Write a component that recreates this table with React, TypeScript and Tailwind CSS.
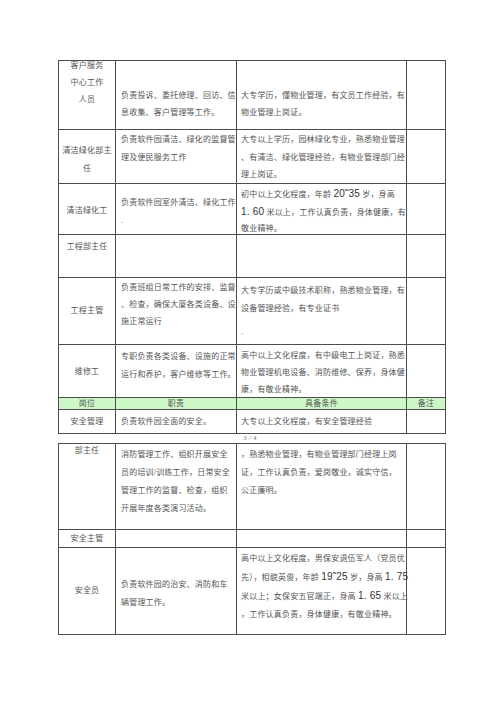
import React from 'react';

type L = React.ReactNode;

// numbers in the scanned doc are set in a sans face, a bit larger
const N = ({ children }: { children: React.ReactNode }) => (
  <span className="font-['Liberation_Sans',sans-serif] text-[10px] text-[#333]">{children}</span>
);

const Lines = ({ lines, className = '' }: { lines: L[]; className?: string }) => (
  <div className={className}>
    {lines.map((l, i) => (
      <div key={i} className="whitespace-nowrap">
        {l}
      </div>
    ))}
  </div>
);

const Row = ({ h, children, head = false }: { h: string; children: React.ReactNode; head?: boolean }) => (
  <div
    className={`grid grid-cols-[57px_121px_170px_39px] border-b border-[#4d4d4d] ${h} ${head ? 'bg-[#cdf7c6]' : ''}`}
  >
    {children}
  </div>
);

const C = ({ className = '', children }: { className?: string; children?: React.ReactNode }) => (
  <div className={`border-r border-[#4d4d4d] overflow-visible ${className}`}>{children}</div>
);

export default function App() {
  return (
    <div className="w-[500px] h-[707px] bg-white pt-[60px] font-['Liberation_Serif','Noto_Sans_CJK_SC',serif] text-[8px] tracking-[0.2px] text-[#555]">
      {/* page 3 */}
      <div className="ml-[58px] w-[388px] border-l border-t border-[#4d4d4d]">
        <Row h="h-[69px]">
          <C className="text-center leading-[17px]">
            <Lines className="-mt-[4px]" lines={['客户服务', '中心工作', '人员']} />
          </C>
          <C className="pl-[5px] pt-[26px] leading-[17px]">
            <Lines lines={['负责投诉、委托修理、回访、信', '息收集、客户管理等工作。']} />
          </C>
          <C className="pl-[4px] pt-[26px] leading-[17px]">
            <Lines lines={['大专学历，懂物业管理，有文员工作经验，有', '物业管理上岗证。']} />
          </C>
          <C />
        </Row>

        <Row h="h-[54px]">
          <C className="text-center pt-[12px] leading-[17.5px]">
            <Lines lines={['清洁绿化部主', '任']} />
          </C>
          <C className="pl-[5px] pt-[1px] leading-[17.5px]">
            <Lines lines={['负责软件园清洁、绿化的监督管', '理及便民服务工作']} />
          </C>
          <C className="pl-[4px] pt-[1px] leading-[17.5px]">
            <Lines
              lines={['大专以上学历，园林绿化专业，熟悉物业管理', '、有清洁、绿化管理经验，有物业管理部门经', '理上岗证。']}
            />
          </C>
          <C />
        </Row>

        <Row h="h-[51px]">
          <C className="flex items-center justify-center">清洁绿化工</C>
          <C className="pl-[5px] pt-[10px] leading-[18px]">
            <Lines lines={['负责软件园室外清洁、绿化工作', '.']} />
          </C>
          <C className="pl-[4px] pt-[2px] leading-[16.5px]">
            <Lines
              lines={[
                <>初中以上文化程度，年龄 <N>20˜35</N> 岁，身高</>,
                <><N>1. 60</N> 米以上，工作认真负责，身体健康，有</>,
                '敬业精神。',
              ]}
            />
          </C>
          <C />
        </Row>

        <Row h="h-[43px]">
          <C className="text-center pt-[3px] leading-[17px]">工程部主任</C>
          <C />
          <C />
          <C />
        </Row>

        <Row h="h-[67px]">
          <C className="flex items-center justify-center">工程主管</C>
          <C className="pl-[5px] pt-[1px] leading-[17px]">
            <Lines lines={['负责班组日常工作的安排、监督', '、检查，确保大厦各类设备、设', '施正常运行']} />
          </C>
          <C className="pl-[4px] pt-[4px] leading-[17.5px]">
            <Lines lines={['大专学历或中级技术职称，熟悉物业管理，有', '设备管理经验，有专业证书']} />
            <div className="mt-[6px]">.</div>
          </C>
          <C />
        </Row>

        <Row h="h-[53px]">
          <C className="flex items-center justify-center">维修工</C>
          <C className="pl-[5px] pt-[3px] leading-[17.5px]">
            <Lines lines={['专职负责各类设备、设施的正常', '运行和养护，客户维修等工作。']} />
          </C>
          <C className="pl-[4px] pt-[2px] leading-[17px]">
            <Lines
              lines={['高中以上文化程度，有中级电工上岗证，熟悉', '物业管理机电设备、消防维修、保养，身体健', '康，有敬业精神。']}
            />
          </C>
          <C />
        </Row>

        <Row h="h-[12px]" head>
          <C className="text-center leading-[11px]">岗位</C>
          <C className="text-center leading-[11px]">职责</C>
          <C className="text-center leading-[11px]">具备条件</C>
          <C className="text-center leading-[11px]">备注</C>
        </Row>

        <Row h="h-[24px]">
          <C className="flex items-center justify-center">安全管理</C>
          <C className="flex items-center pl-[5px]">负责软件园全面的安全。</C>
          <C className="flex items-center pl-[4px]">大专以上文化程度，有安全管理经验</C>
          <C />
        </Row>
      </div>

      <div className="h-[9px] text-center text-[7px] leading-[9px] text-[#777]">3 / 4</div>

      {/* page 4 */}
      <div className="ml-[58px] w-[388px] border-l border-t border-[#4d4d4d]">
        <Row h="h-[86px]">
          <C className="text-center leading-[18px]">
            <div className="-mt-[2px]">部主任</div>
          </C>
          <C className="pl-[5px] pt-[2px] leading-[18px]">
            <Lines
              lines={['消防管理工作、组织开展安全', '员的培训/训练工作，日常安全', '管理工作的监督、检查，组织', '开展年度各类演习活动。']}
            />
          </C>
          <C className="pl-[4px] pt-[2px] leading-[18px]">
            <Lines lines={['，熟悉物业管理，有物业管理部门经理上岗', '证，工作认真负责，爱岗敬业，诚实守信，', '公正廉明。']} />
          </C>
          <C />
        </Row>

        <Row h="h-[18px]">
          <C className="flex items-center justify-center">安全主管</C>
          <C />
          <C />
          <C />
        </Row>

        <Row h="h-[87px]">
          <C className="flex items-center justify-center">安全员</C>
          <C className="pl-[5px] pt-[28px] leading-[17.5px]">
            <Lines lines={['负责软件园的治安、消防和车', '辆管理工作。']} />
          </C>
          <C className="pl-[4px] pt-[2px] leading-[18px]">
            <Lines
              lines={[
                '高中以上文化程度，男保安退伍军人（党员优',
                <>先），相貌英俊，年龄 <N>19˜25</N> 岁，身高 <N>1. 75</N></>,
                <>米以上；女保安五官端正，身高 <N>1. 65</N> 米以上</>,
                '，工作认真负责，身体健康，有敬业精神。',
              ]}
            />
          </C>
          <C />
        </Row>
      </div>
    </div>
  );
}
